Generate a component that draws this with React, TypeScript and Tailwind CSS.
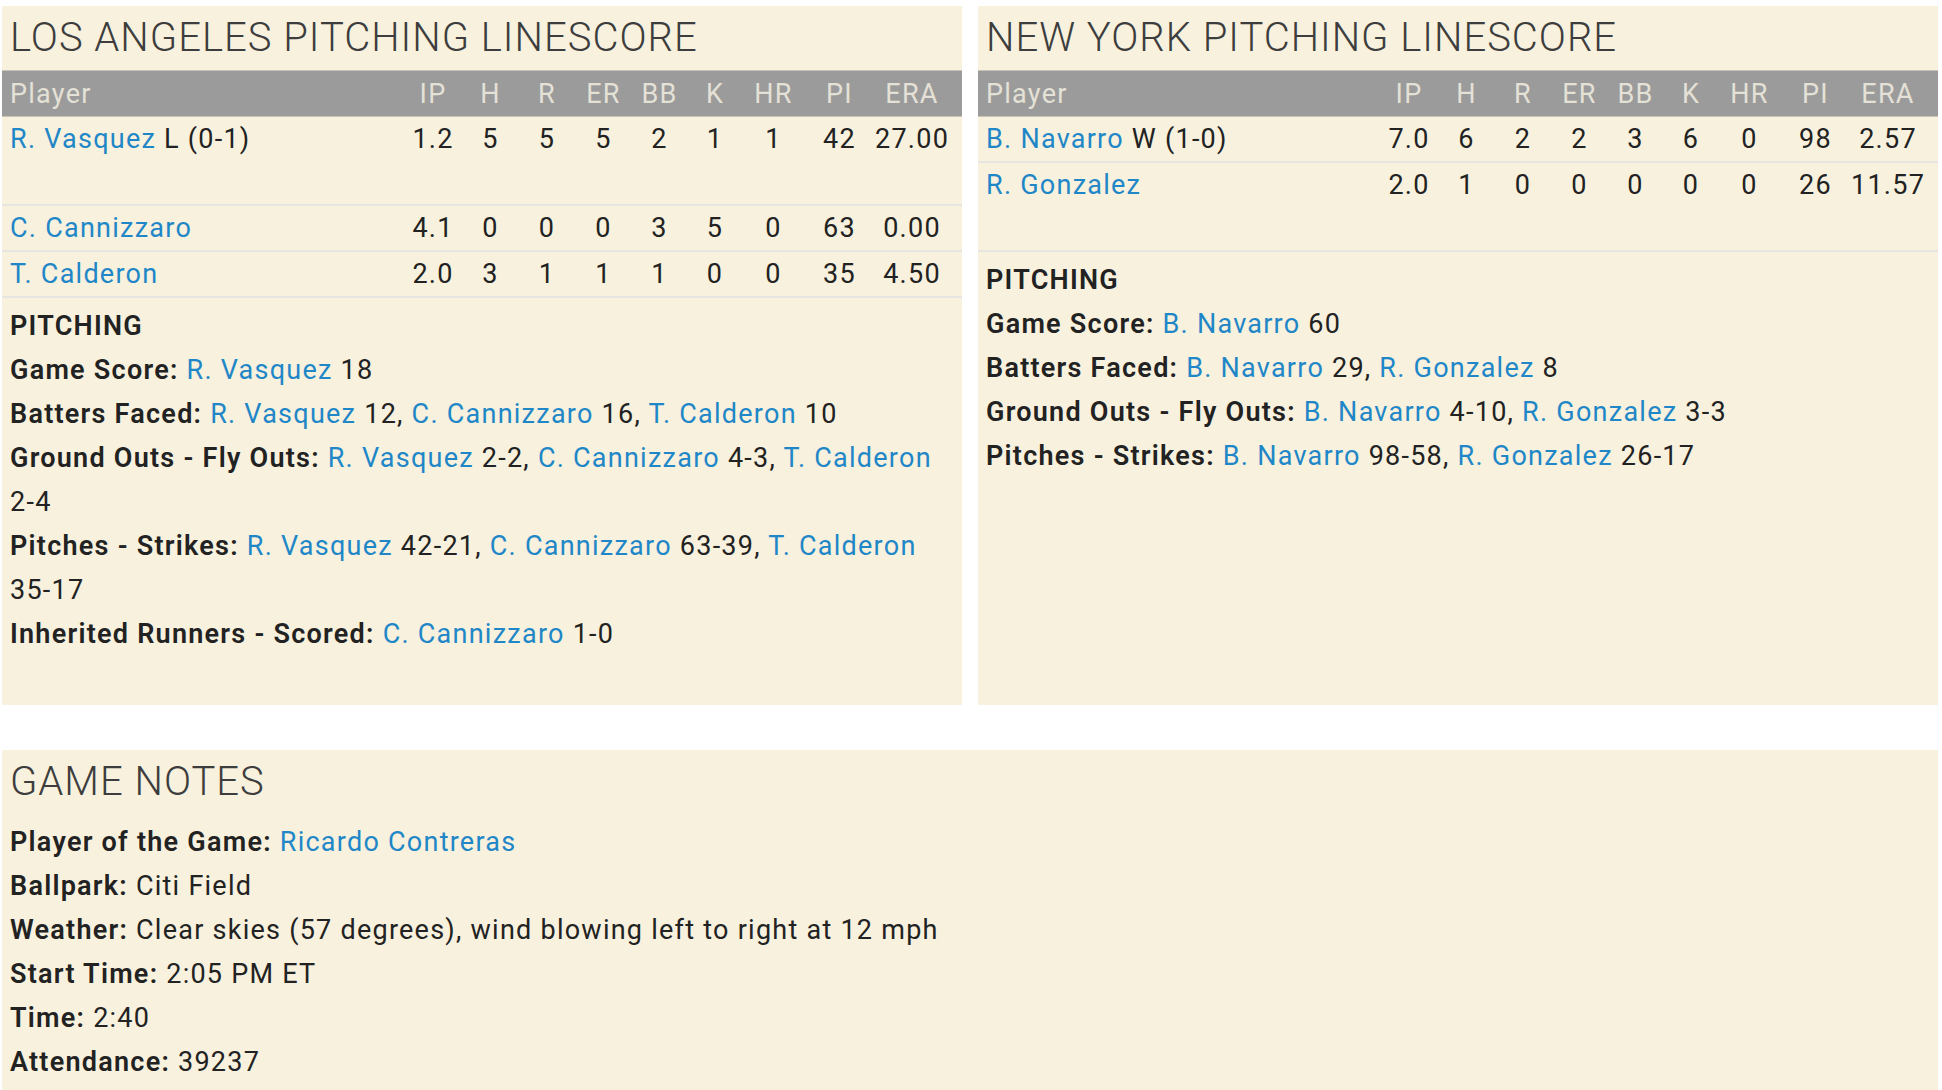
import React from 'react';

type Line = { label: string; parts: (string | { link: string })[] };

const cols = [
  { key: 'IP', w: 'w-[58px]' },
  { key: 'H', w: 'w-[57px]' },
  { key: 'R', w: 'w-[56px]' },
  { key: 'ER', w: 'w-[57px]' },
  { key: 'BB', w: 'w-[55px]' },
  { key: 'K', w: 'w-[56px]' },
  { key: 'HR', w: 'w-[61px]' },
  { key: 'PI', w: 'w-[71px]' },
  { key: 'ERA', w: 'w-[74px]' },
];

interface Pitcher {
  name: string;
  note?: string;
  stats: string[];
  tall?: boolean;
}

const laPitchers: Pitcher[] = [
  { name: 'R. Vasquez', note: 'L (0-1)', stats: ['1.2', '5', '5', '5', '2', '1', '1', '42', '27.00'], tall: true },
  { name: 'C. Cannizzaro', stats: ['4.1', '0', '0', '0', '3', '5', '0', '63', '0.00'] },
  { name: 'T. Calderon', stats: ['2.0', '3', '1', '1', '1', '0', '0', '35', '4.50'] },
];

const nyPitchers: Pitcher[] = [
  { name: 'B. Navarro', note: 'W (1-0)', stats: ['7.0', '6', '2', '2', '3', '6', '0', '98', '2.57'] },
  { name: 'R. Gonzalez', stats: ['2.0', '1', '0', '0', '0', '0', '0', '26', '11.57'], tall: true },
];

const laLines: Line[] = [
  { label: 'Game Score:', parts: [{ link: 'R. Vasquez' }, '18'] },
  {
    label: 'Batters Faced:',
    parts: [{ link: 'R. Vasquez' }, '12,', { link: 'C. Cannizzaro' }, '16,', { link: 'T. Calderon' }, '10'],
  },
  {
    label: 'Ground Outs - Fly Outs:',
    parts: [{ link: 'R. Vasquez' }, '2-2,', { link: 'C. Cannizzaro' }, '4-3,', { link: 'T. Calderon' }, '2-4'],
  },
  {
    label: 'Pitches - Strikes:',
    parts: [{ link: 'R. Vasquez' }, '42-21,', { link: 'C. Cannizzaro' }, '63-39,', { link: 'T. Calderon' }, '35-17'],
  },
  { label: 'Inherited Runners - Scored:', parts: [{ link: 'C. Cannizzaro' }, '1-0'] },
];

const nyLines: Line[] = [
  { label: 'Game Score:', parts: [{ link: 'B. Navarro' }, '60'] },
  { label: 'Batters Faced:', parts: [{ link: 'B. Navarro' }, '29,', { link: 'R. Gonzalez' }, '8'] },
  { label: 'Ground Outs - Fly Outs:', parts: [{ link: 'B. Navarro' }, '4-10,', { link: 'R. Gonzalez' }, '3-3'] },
  { label: 'Pitches - Strikes:', parts: [{ link: 'B. Navarro' }, '98-58,', { link: 'R. Gonzalez' }, '26-17'] },
];

const notes: Line[] = [
  { label: 'Player of the Game:', parts: [{ link: 'Ricardo Contreras' }] },
  { label: 'Ballpark:', parts: ['Citi Field'] },
  { label: 'Weather:', parts: ['Clear skies (57 degrees), wind blowing left to right at 12 mph'] },
  { label: 'Start Time:', parts: ['2:05 PM ET'] },
  { label: 'Time:', parts: ['2:40'] },
  { label: 'Attendance:', parts: ['39237'] },
];

function InfoLine({ line }: { line: Line }) {
  return (
    <div className="leading-[44px] text-[#222]">
      <span className="font-semibold">{line.label}</span>
      {line.parts.map((p, i) =>
        typeof p === 'string' ? (
          <span key={i}>
            {' '}
            <span className={p.length < 8 ? 'whitespace-nowrap' : ''}>{p}</span>
          </span>
        ) : (
          <span key={i}>
            {' '}
            <a className="text-[#1f87c7]">{p.link}</a>
          </span>
        ),
      )}
    </div>
  );
}

function Title({ children }: { children: string }) {
  return (
    <h2 className="px-2 text-[40px] leading-[64px] font-light tracking-[1px] text-[#3d3d3d]">{children}</h2>
  );
}

function LinescorePanel({ team, pitchers, lines }: { team: string; pitchers: Pitcher[]; lines: Line[] }) {
  return (
    <section className="flex-1 h-[699px] bg-[#f7f1de] overflow-hidden">
      <Title>{`${team} PITCHING LINESCORE`}</Title>

      {/* Header */}
      <div className="flex h-[47px] items-center pl-2 pr-[13px] bg-[#9b9b9b] border-y border-[#c8c5b8] text-[#e4e1d6] leading-[44px]">
        <div className="flex-1">Player</div>
        {cols.map((c) => (
          <div key={c.key} className={`${c.w} text-center`}>
            {c.key}
          </div>
        ))}
      </div>

      {/* Rows */}
      {pitchers.map((p) => (
        <div
          key={p.name}
          className={`flex items-start pl-2 pr-[13px] border-b-2 border-[#e6e5e1] leading-[44px] text-[#222] ${
            p.tall ? 'h-[89px]' : 'h-[46px]'
          }`}
        >
          <div className="flex-1 whitespace-nowrap">
            <a className="text-[#1f87c7]">{p.name}</a>
            {p.note && <span> {p.note}</span>}
          </div>
          {p.stats.map((s, i) => (
            <div key={i} className={`${cols[i].w} text-center whitespace-nowrap`}>
              {s}
            </div>
          ))}
        </div>
      ))}

      {/* Pitching notes */}
      <div className="px-2 pt-1.5">
        <div className="leading-[44px] font-semibold text-[#222]">PITCHING</div>
        {lines.map((l) => (
          <InfoLine key={l.label} line={l} />
        ))}
      </div>
    </section>
  );
}

export default function App() {
  return (
    <div className="min-h-screen bg-white pt-1.5 pl-0.5 pr-1 font-[family-name:Roboto,sans-serif] text-[27px] tracking-[1.25px]">
      <div className="flex gap-4">
        <LinescorePanel team="LOS ANGELES" pitchers={laPitchers} lines={laLines} />
        <LinescorePanel team="NEW YORK" pitchers={nyPitchers} lines={nyLines} />
      </div>

      <section className="mt-[45px] h-[400px] bg-[#f7f1de]">
        <Title>GAME NOTES</Title>
        <div className="px-2 pt-1.5">
          {notes.map((l) => (
            <InfoLine key={l.label} line={l} />
          ))}
        </div>
      </section>
    </div>
  );
}
